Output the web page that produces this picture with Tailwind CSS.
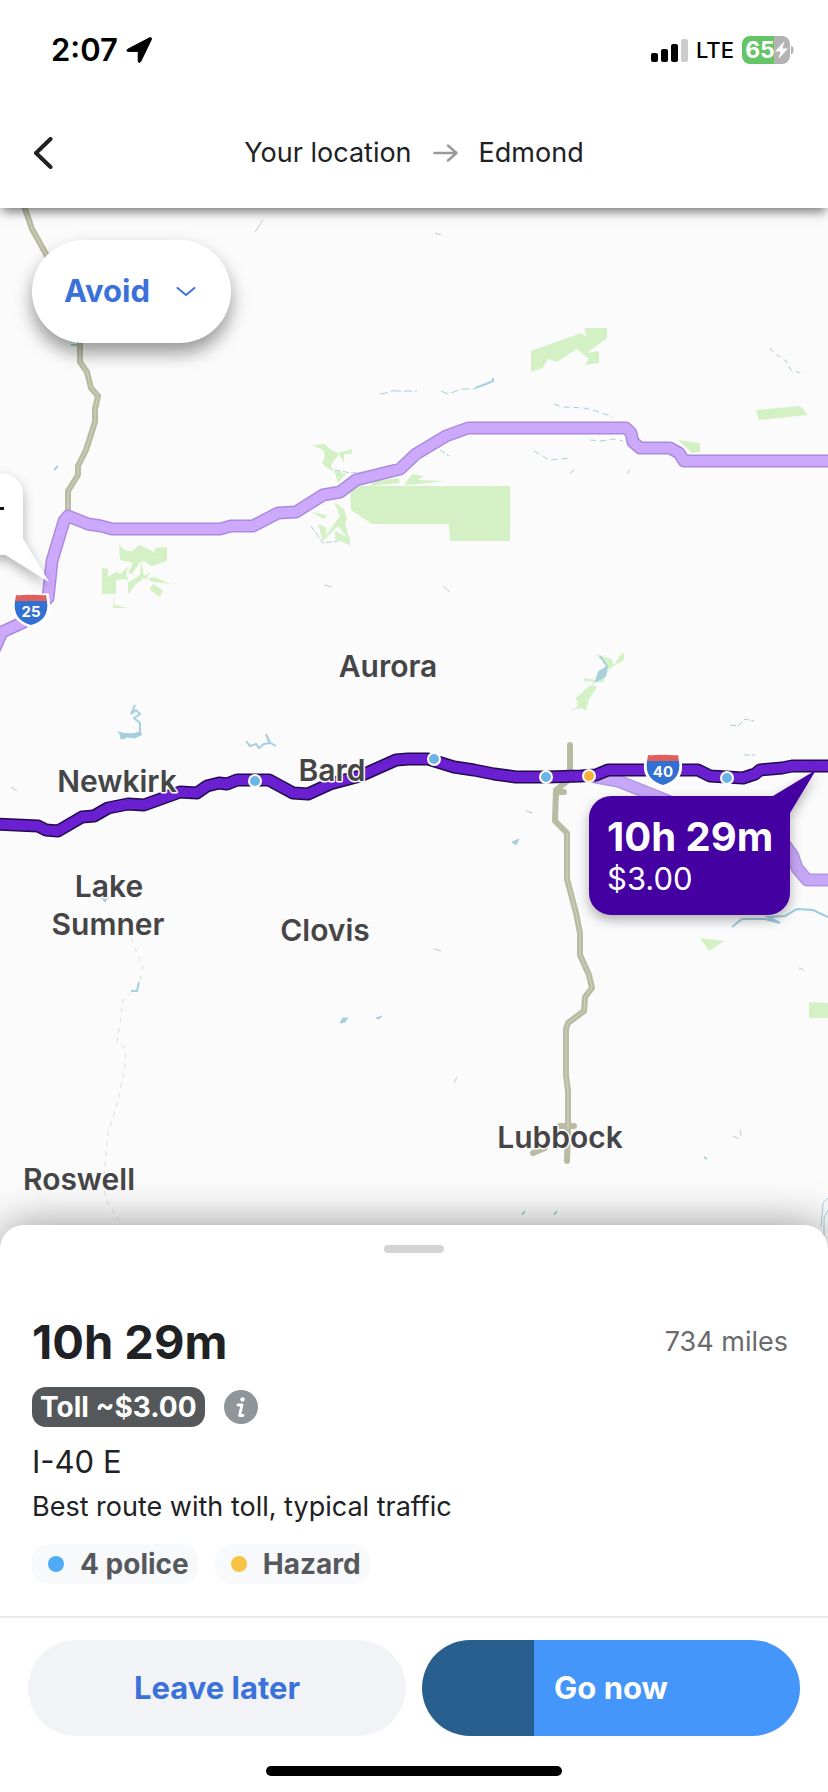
<!DOCTYPE html>
<html lang="en">
  <head>
    <meta charset="UTF-8" />
    <meta name="viewport" content="width=device-width, initial-scale=1.0" />
    <title>Route preview</title>
    <script src="https://cdn.jsdelivr.net/npm/@tailwindcss/browser@4"></script>
  </head>
  <body class="flex min-h-screen flex-col bg-white font-['Inter','Liberation_Sans',sans-serif] text-[#202124]">

    <!-- Header -->
    <header class="relative z-10 h-52 bg-white shadow-[0_6px_10px_-2px_rgba(0,0,0,0.5)]">
      <div class="flex h-[100px] items-center justify-between pr-[34px] pl-[51px] text-black">
        <div class="flex items-center gap-2">
          <span class="text-[31px] font-semibold">2:07</span>
          <svg class="size-[26px]" viewBox="0 0 26 26" fill="currentColor" aria-hidden="true">
            <path d="M23.600 .8 1.800 12.200c-1.400.8-1 2.200.4 2.200h9.400c.4 0 .6.2.6.6v9c0 1.700 1.800 2 2.500.6L25.400 2.400c.6-1.300-.6-2.300-1.800-1.600z" stroke="currentColor" stroke-width="1" stroke-linejoin="round" />
          </svg>
        </div>
        <div class="flex items-center gap-2">
          <svg class="h-6 w-[37px]" viewBox="0 0 37 24" aria-hidden="true">
            <rect x="0" y="15" width="7" height="9" rx="2" />
            <rect x="10" y="11" width="7" height="13" rx="2" />
            <rect x="20" y="6" width="7" height="18" rx="2" />
            <rect x="30" y="1" width="7" height="23" rx="2" fill="#ccc" />
          </svg>
          <span class="text-[22px] leading-[28px] font-medium">LTE</span>
          <svg class="h-7 w-[52px]" viewBox="0 0 52 28" role="img" aria-label="Battery 65%, charging">
            <path d="M8 0h24v28H8a8 8 0 0 1-8-8V8a8 8 0 0 1 8-8z" fill="#65c466" />
            <path d="M32 0h8a8 8 0 0 1 8 8v12a8 8 0 0 1-8 8h-8z" fill="#b3b3b3" />
            <path d="M49 9.500c3.500 1.500 3.500 7.500 0 9z" fill="#b3b3b3" />
            <text x="18" y="22" text-anchor="middle" class="fill-white text-[23px] font-bold">65</text>
            <path d="M42.500 5 33 15.500h5.500L36.500 23 46 12.500h-5.500z" fill="#fff" />
          </svg>
        </div>
      </div>
      <nav class="relative flex h-[106px] items-center justify-center gap-[21px] text-[27px]">
        <button class="absolute inset-y-0 left-8 flex items-center" aria-label="Back">
          <svg class="h-8 w-[22px]" viewBox="0 0 22 32" fill="none" stroke="currentColor" stroke-width="4" stroke-linecap="round" stroke-linejoin="round">
            <path d="M18.500 2 4 16l14.500 14" />
          </svg>
        </button>
        <span>Your location</span>
        <svg class="h-[18px] w-[25px]" viewBox="0 0 25 18" fill="none" stroke="#9a9a9a" stroke-width="2.500" stroke-linecap="round" stroke-linejoin="round" aria-hidden="true">
          <path d="M1.500 9H23M15 1.500 23.500 9 15 16.500" />
        </svg>
        <span>Edmond</span>
      </nav>
    </header>

    <!-- Map -->
    <main class="relative flex-1 overflow-hidden bg-[#fbfbfb]">
      <svg class="absolute inset-0 h-full w-full" viewBox="0 208 828 1041" preserveAspectRatio="xMidYMid slice" role="img" aria-label="Map with routes to Edmond">
        <defs>
          <filter id="drop" x="-20%" y="-20%" width="140%" height="150%">
            <feDropShadow dx="0" dy="5" stdDeviation="6" flood-color="#000" flood-opacity="0.3" />
          </filter>
          <g id="shield">
            <path d="M-16-15c5 2 10-1 16-1s11 3 16 1l1 10C18 7 10 12 0 16-10 12-18 7-17-5z" fill="#fff" stroke="#fff" stroke-width="4" stroke-linejoin="round" />
            <path d="M-16-9h32c2 14-5 21-16 24-11-3-18-10-16-24z" fill="#3270d2" />
            <path d="M-15-15c5 1 10-1 15 0 5-1 10 1 15 0l1 6h-32z" fill="#e2605b" />
          </g>
        </defs>

        <!-- Parks -->
        <g fill="#d3f1c4">
          <path d="M350 494l5-8h155v55h-60l-1-17h-77l-21-14z" />
          <path d="M531 351l50-18 6 4-3-9h23v10l-20 15 12-2v12l-14 2 4-6-12-10-20 13-9-3-5 9-12 4z" />
          <path d="M756 410l44-4 8 9-49 5z" />
          <path d="M678 440l22 3v9l-8 1z" />
          <path d="M119 545l7 6h6l7-6 9 4 8 4-2-5 13-1v14l-15 5-8-5-4 1-8 12-4-1 5-10-13-3z" />
          <path d="M102 568l6 1v8l8-5 5 2 7-8-2 9 3 5-7-1-6 1v14h-14z" />
          <path d="M113 594l1 11 14 3h-15z" />
          <path d="M128 583l12-8 1-14 3 15 6-4-4 8 8-3 17 7-18-2-9-4-9 7-7 10z" />
          <path d="M153 584l10 6-3 7-11-8z" />
          <path d="M312 445l13-1 6 6 7 3 14-4v5h-8v9l-5-9-6 8-2 4 3 6-8-5-4-4 3-7-2-6z" />
          <path d="M334 470l12 4-8 9z" />
          <path d="M311 512l16 3-3 4zM318 524l8 3v8l14-19-6-14 10 7 3 10-2 4 5 18-12-15-15 15zM335 531l15 8v6l-15-6z" />
          <path d="M374 481l24-3 2 5-30 3zM404 485l8-11 12 2-7 4 28 1-26 3z" />
          <path d="M576 698l12-11 10-5-14-1v-3l12 2 7-5 6-6-13-15 15 5 3 6 6-10 4-2v7l-12 7-8 8v7l-11 1-8 13-3 12-14 3 10-4z" />
          <path d="M577 697l15-12 5 2-8 12-3 12-7-5z" />
          <path d="M700 938l24 3-15 10zM809 1002l19 1v15h-19z" />
        </g>

        <!-- Rivers and lakes -->
        <g fill="none" stroke="#a6d0dd" stroke-width="1">
          <path d="M135 705l-4 9 5-4 4 4-6 4 6 5v12l-7 2-13-4 5 6M121 736l13-2 6 1" stroke-width="2" />
          <path d="M120 733l13 1 6-2 3 2-7 4-8-1-6 2z" fill="#a6d0dd" />
          <path d="M246 741l4 5 6-2 3 4 5-4 6-1-4-9 3 8 7 4" stroke-width="2" />
          <path d="M596 681l3-9 8-5-2 9zM600 656l7 10" fill="#a6d0dd" stroke-width="2" />
          <path d="M732 927l10-8 23 0 15 4-12-6 17-1 12-7 16 1 15 7" stroke="#9ccbe2" stroke-width="2" />
          <path d="M475 388l11-4 7-3v-3" stroke-width="2" />
          <path d="M380 394l6-1 8-3M393 391h24M441 391l7 3 14-5 13 0" stroke-dasharray="8 3" />
          <path d="M554 404l8 3 22 1 12 3 17 6M590 440l12 1 11-2 10 2M534 451l15 9 22-2" stroke-dasharray="6 4" />
          <path d="M570 473l7-5M627 474l4-6M770 348l4 5 12 8 5 9 13 4" stroke-dasharray="5 4" />
          <path d="M730 725l8 1 7-7 9 2M744 755h11M440 450l9 6M311 526l12 17 15-2M335 470l16 3 14-1" stroke-dasharray="6 2" />
          <path d="M324 585l8 2M443 586l7 6M255 232l8-12M435 233l6 2M11 787l6 4M434 949l7 2M454 1083l3-6M733 1136l6 3M799 968l5 2M740 1130l1 6M526 811l7 2" stroke="#bccbce" />
          <path d="M131 938l8 20 4 7-4 21-17 16-2 22-3 18 8 6v20l-8 36-9 30-4 40-1 12 4 16 12 18" stroke-dasharray="5 5" stroke="#cfe3e7" />
          <path d="M131 991h6l2-9M704 1157l3 2M522 1215l3-4M554 1215l3-4M54 470l4-4M71 345h12" stroke-width="2" />
          <path d="M340 1023l3-5h5l-3 4zM376 1018l6-2-3 3zM512 842l7-3-3 6zM101 897h8l-4 5z" fill="#a6d0dd" />
          <path d="M828 1198l-5 5-2 24M828 1210l-4 8v20" />
        </g>

        <!-- Highways -->
        <g fill="none" stroke-linecap="round" stroke-linejoin="round">
          <g stroke="#b9bba2" stroke-width="6">
            <path d="M22 200l10 29 14 25 34 86v22l7 10 4 16 7 8-3 13v13l-9 28-8 16v9l-10 16v26" />
            <path d="M570 745v34l-14 11-1 31 12 12v46l9 34 4 20v22l9 20 3 13-7 9-1 14-16 12-2 6v46l2 16v38l-1 32M556 792h8M533 1153l12-5M560 1126h14" />
          </g>
          <g stroke="#d3d4c2" stroke-width="1" stroke-linecap="butt">
            <path d="M22 200l10 29 14 25 34 86v22l7 10 4 16 7 8-3 13v13l-9 28-8 16v9l-10 16v26" />
            <path d="M567 833v46l9 34 4 20v22l9 20 3 13-7 9-1 14-16 12-2 6v46l2 16v38" />
          </g>
        </g>

        <!-- Alternative routes, casing first -->
        <g fill="none" stroke-linecap="round" stroke-linejoin="round">
          <g stroke="#aa8ade" stroke-width="13">
            <path d="M-6 650l8-18 22-10 24-24 4-37 12-40 4-5 20 8 13 2 11 3h108l11-3h22l25-13 18-1 27-17 17-3 16-12 44-11 16-15 30-18 22-8h158l5 5 2 9 7 6h30l9 5 5 8h150" />
            <path d="M590 776l28 5 50 20M786 846l7 10 4 12 10 12h24" stroke="#b296e2" />
          </g>
          <g stroke="#cda9fb" stroke-width="10">
            <path d="M-6 650l8-18 22-10 24-24 4-37 12-40 4-5 20 8 13 2 11 3h108l11-3h22l25-13 18-1 27-17 17-3 16-12 44-11 16-15 30-18 22-8h158l5 5 2 9 7 6h30l9 5 5 8h150" />
            <path d="M590 776l28 5 50 20M786 846l7 10 4 12 10 12h24" stroke="#c6a6f6" />
          </g>
        </g>

        <!-- Selected route -->
        <g fill="none" stroke-linejoin="round">
          <path d="M-4 824l42 2 8 4 12 1 24-14 12-1 14-8 20-4 16 1 36-13 17 1 10-7 12-3 8 1 10-4h32l24 13 15 1 22-10 30-8 36-16 12-1h20l26 8 20 3 20 4 22 3h30l35-1 15-1 12-5h90l12 6 33 2 12-4 5-4 22-2 10-2h40" stroke="#210a4d" stroke-width="13" />
          <path d="M-4 824l42 2 8 4 12 1 24-14 12-1 14-8 20-4 16 1 36-13 17 1 10-7 12-3 8 1 10-4h32l24 13 15 1 22-10 30-8 36-16 12-1h20l26 8 20 3 20 4 22 3h30l35-1 15-1 12-5h90l12 6 33 2 12-4 5-4 22-2 10-2h40" stroke="#6a1fd0" stroke-width="10" />
        </g>
        <g fill="#6ab5e6" stroke="#fff" stroke-width="2">
          <circle cx="255" cy="781" r="6" />
          <circle cx="434" cy="759" r="6" />
          <circle cx="546" cy="777" r="6" />
          <circle cx="727" cy="778" r="6" />
          <circle cx="589" cy="776" r="6" fill="#fbb03b" />
        </g>

        <!-- Interstate shields -->
        <g class="fill-white text-[15px] font-bold" text-anchor="middle">
          <use href="#shield" x="31" y="610" />
          <text x="31" y="617">25</text>
          <use href="#shield" x="663" y="770" />
          <text x="663" y="777">40</text>
        </g>

        <!-- Cities -->
        <g class="fill-[#454547] text-[30px] font-semibold" text-anchor="middle" stroke="#fbfbfb" stroke-width="3" stroke-linejoin="round" paint-order="stroke">
          <text x="388" y="677">Aurora</text>
          <text x="117" y="792">Newkirk</text>
          <text x="332" y="781">Bard</text>
          <text x="109" y="897">Lake</text>
          <text x="108" y="935">Sumner</text>
          <text x="325" y="941">Clovis</text>
          <text x="560" y="1148">Lubbock</text>
          <text x="79" y="1190">Roswell</text>
        </g>

        <!-- Route callouts -->
        <path d="M-30 473H1a22 22 0 0 1 22 22v44l26 43-43-27h-36z" fill="#fff" filter="url(#drop)" />
        <path d="M-2 507h6v3h-6z" fill="#111" />
        <path d="M611 796h162l43-26-26 43v80a22 22 0 0 1-22 22H611a22 22 0 0 1-22-22v-75a22 22 0 0 1 22-22z" fill="#4404a2" filter="url(#drop)" />
        <g class="fill-white">
          <text x="607" y="851" class="text-[40px] font-bold">10h 29m</text>
          <text x="607" y="890" class="text-[31px]">$3.00</text>
        </g>
      </svg>

      <button class="absolute top-8 left-8 flex h-[103px] items-center gap-[26px] rounded-full bg-white pr-[35px] pl-8 text-[31px] font-bold text-[#3b72d9] shadow-[0_10px_18px_rgba(0,0,0,0.4)]">
        Avoid
        <svg class="h-3 w-5" viewBox="0 0 20 12" fill="none" stroke="currentColor" stroke-width="2" stroke-linecap="round" stroke-linejoin="round" aria-hidden="true">
          <path d="M1.500 2 10 9l8.500-7" />
        </svg>
      </button>
    </main>

    <!-- Bottom sheet -->
    <section class="relative -mt-6 rounded-t-[24px] bg-white shadow-[0_0_44px_rgba(0,0,0,0.4)]">
      <div class="mx-auto mt-5 h-2 w-[60px] rounded-full bg-[#d4d4d4]"></div>

      <div class="px-8 pt-[60px] pb-8">
        <div class="flex items-center justify-between pr-2">
          <h1 class="text-[47px] leading-[58px] font-bold">10h 29m</h1>
          <p class="text-[27px] text-[#6a6a6c]">734 miles</p>
        </div>
        <div class="mt-4 flex items-center gap-[19px]">
          <span class="rounded-[14px] bg-[#54585a] px-2 text-[28px] leading-[40px] font-bold text-white">Toll ~$3.00</span>
          <button aria-label="Toll information">
            <svg class="size-[34px]" viewBox="0 0 34 34">
              <circle cx="17" cy="17" r="17" fill="#8f9599" />
              <circle cx="18.500" cy="9.500" r="2.200" fill="#fff" />
              <path d="M14 15h4l-2.500 10.500H19" fill="none" stroke="#fff" stroke-width="2.800" stroke-linecap="round" stroke-linejoin="round" />
            </svg>
          </button>
        </div>
        <p class="mt-[15px] text-[31px] leading-[40px]">I-40 E</p>
        <p class="mt-[5px] text-[27px] leading-[40px]">Best route with toll, typical traffic</p>
        <ul class="mt-[17px] flex gap-[17px] text-[28px] leading-[40px] font-bold text-[#55595d]">
          <li class="flex items-center gap-4 rounded-[16px] bg-[#f8f9fb] pr-[9px] pl-4">
            <span class="size-4 rounded-full bg-[#4dabf7]"></span>4 police
          </li>
          <li class="flex items-center gap-4 rounded-[16px] bg-[#f8f9fb] pr-[9px] pl-4">
            <span class="size-4 rounded-full bg-[#f7c543]"></span>Hazard
          </li>
        </ul>
      </div>

      <div class="grid grid-cols-2 gap-4 border-t-2 border-[#e9e9ea] px-7 pt-[22px] pb-[30px] text-[31px] font-bold">
        <button class="h-24 rounded-full bg-[#f2f3f7] text-[#3b72d9]">Leave later</button>
        <button class="h-24 rounded-full bg-linear-to-r from-[#285f8f] from-[112px] to-[#4496fa] to-[112px] text-white">Go now</button>
      </div>
      <div class="mx-auto mb-4 h-[10px] w-[296px] rounded-full bg-black"></div>
    </section>
  </body>
</html>
